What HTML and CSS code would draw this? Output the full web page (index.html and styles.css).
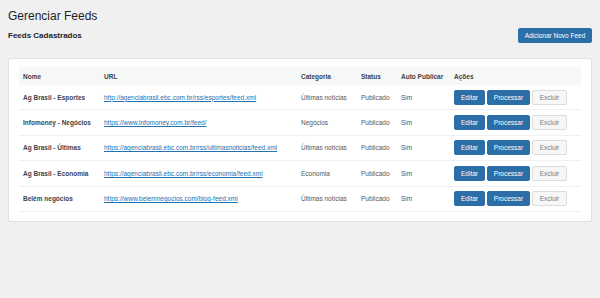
FILE: index.html
```html
<!DOCTYPE html>
<html lang="pt-BR">
<head>
  <meta charset="UTF-8" />
  <title>Gerenciar Feeds</title>
  <link rel="stylesheet" href="styles.css">
</head>
<body>
  <div class="wrap">
    <h1>Gerenciar Feeds</h1>

    <div class="section-head">
      <h2>Feeds Cadastrados</h2>
      <button class="btn btn-primary btn-add">Adicionar Novo Feed</button>
    </div>

    <div class="card">
      <table class="feeds">
        <colgroup>
          <col class="c-name">
          <col class="c-url">
          <col class="c-cat">
          <col class="c-status">
          <col class="c-auto">
          <col class="c-actions">
        </colgroup>
        <thead>
          <tr>
            <th>Nome</th>
            <th>URL</th>
            <th>Categoria</th>
            <th>Status</th>
            <th>Auto Publicar</th>
            <th>Ações</th>
          </tr>
        </thead>
        <tbody>
          <tr>
            <td class="name">Ag Brasil - Esportes</td>
            <td><a href="#">http://agenciabrasil.ebc.com.br/rss/esportes/feed.xml</a></td>
            <td>Últimas notícias</td>
            <td>Publicado</td>
            <td>Sim</td>
            <td class="actions">
              <button class="btn btn-primary">Editar</button>
              <button class="btn btn-primary">Processar</button>
              <button class="btn btn-light">Excluir</button>
            </td>
          </tr>
          <tr>
            <td class="name">Infomoney - Negócios</td>
            <td><a href="#">https://www.infomoney.com.br/feed/</a></td>
            <td>Negócios</td>
            <td>Publicado</td>
            <td>Sim</td>
            <td class="actions">
              <button class="btn btn-primary">Editar</button>
              <button class="btn btn-primary">Processar</button>
              <button class="btn btn-light">Excluir</button>
            </td>
          </tr>
          <tr>
            <td class="name">Ag Brasil - Últimas</td>
            <td><a href="#">https://agenciabrasil.ebc.com.br/rss/ultimasnoticias/feed.xml</a></td>
            <td>Últimas notícias</td>
            <td>Publicado</td>
            <td>Sim</td>
            <td class="actions">
              <button class="btn btn-primary">Editar</button>
              <button class="btn btn-primary">Processar</button>
              <button class="btn btn-light">Excluir</button>
            </td>
          </tr>
          <tr>
            <td class="name">Ag Brasil - Economia</td>
            <td><a href="#">https://agenciabrasil.ebc.com.br/rss/economia/feed.xml</a></td>
            <td>Economia</td>
            <td>Publicado</td>
            <td>Sim</td>
            <td class="actions">
              <button class="btn btn-primary">Editar</button>
              <button class="btn btn-primary">Processar</button>
              <button class="btn btn-light">Excluir</button>
            </td>
          </tr>
          <tr>
            <td class="name">Belém negócios</td>
            <td><a href="#">https://www.belemnegocios.com/blog-feed.xml</a></td>
            <td>Últimas notícias</td>
            <td>Publicado</td>
            <td>Sim</td>
            <td class="actions">
              <button class="btn btn-primary">Editar</button>
              <button class="btn btn-primary">Processar</button>
              <button class="btn btn-light">Excluir</button>
            </td>
          </tr>
        </tbody>
      </table>
    </div>
  </div>
</body>
</html>
```

FILE: styles.css
```css
body {
  font-family: "Liberation Sans", Arial, sans-serif;
  background: #f0f0f1;
  color: #1d2327;
  margin: 0;
  padding: 0;
}

.wrap {
  padding: 8px 8px 0 8px;
}

h1 {
  font-size: 12px;
  font-weight: 400;
  margin: 0;
  line-height: 16px;
  color: #1d2327;
}

.section-head {
  display: flex;
  justify-content: space-between;
  align-items: center;
  margin-top: 4px;
  height: 15px;
}

h2 {
  font-size: 8px;
  font-weight: 700;
  margin: 0;
}

.btn {
  font-family: inherit;
  font-size: 6.5px;
  height: 15px;
  padding: 0 4px;
  border-radius: 2px;
  border: 1px solid transparent;
  cursor: pointer;
  margin: 0;
}

.btn-primary {
  background: #2c6ea7;
  border-color: #2c6ea7;
  color: #fff;
}

.btn-light {
  background: #f6f7f7;
  border-color: #dcdcde;
  color: #8c8f94;
}

.btn-add {
  width: 74px;
  height: 15px;
}

.card {
  margin-top: 15px;
  background: #fff;
  border: 1px solid #e0e0e0;
  box-shadow: 0 1px 1px rgba(0, 0, 0, 0.05);
  border-radius: 2px;
  padding: 8px 10px 9px 10px;
}

.feeds {
  width: 100%;
  border-collapse: collapse;
  table-layout: fixed;
  font-size: 6.5px;
}

.c-name { width: 81px; }
.c-url { width: 197px; }
.c-cat { width: 60px; }
.c-status { width: 40px; }
.c-auto { width: 53px; }

.feeds th {
  text-align: left;
  font-weight: 700;
  color: #3c434a;
  background: #f6f7f7;
  height: 18px;
  padding: 0 4px;
}

.feeds td {
  height: 24.4px;
  padding: 0 4px;
  border-bottom: 1px solid #f0f0f1;
  color: #50575e;
  white-space: nowrap;
}

.feeds td.name {
  font-weight: 700;
  color: #3c434a;
}

.feeds a {
  color: #2271b1;
  text-decoration: underline;
}

.actions {
  font-size: 0;
}

.actions .btn {
  margin-right: 2px;
}

.actions .btn-primary:first-child {
  width: 31px;
}

.actions .btn-primary + .btn-primary {
  width: 43px;
}

.actions .btn-light {
  width: 35px;
  color: #787c82;
}
```
